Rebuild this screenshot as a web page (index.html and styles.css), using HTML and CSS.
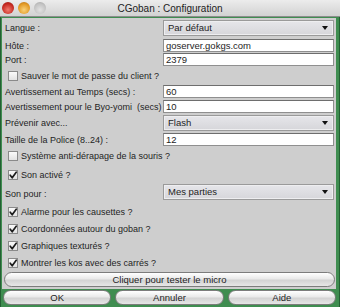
FILE: index.html
```html
<!DOCTYPE html>
<html lang="fr">
<head>
<meta charset="utf-8">
<title>CGoban : Configuration</title>
<link rel="stylesheet" href="styles.css">
</head>
<body>
<div class="window">
  <div class="titlebar">
    <div class="lights">
      <span class="light red"></span>
      <span class="light orange"></span>
      <span class="light gray"></span>
    </div>
    <div class="title">CGoban : Configuration</div>
  </div>
  <div class="panel">
    <div class="row r-langue">
      <span class="lbl">Langue :</span>
      <div class="select">Par défaut<span class="arrow"></span></div>
    </div>
    <div class="row r-field mt2">
      <span class="lbl">Hôte :</span>
      <div class="field">goserver.gokgs.com</div>
    </div>
    <div class="row r-field mt1">
      <span class="lbl">Port :</span>
      <div class="field">2379</div>
    </div>
    <div class="row r-check r-sauver">
      <span class="box"></span><span class="ctext">Sauver le mot de passe du client ?</span>
    </div>
    <div class="row r-field">
      <span class="lbl">Avertissement au Temps (secs) :</span>
      <div class="field">60</div>
    </div>
    <div class="row r-field mt2">
      <span class="lbl">Avertissement pour le Byo-yomi&nbsp; (secs) :</span>
      <div class="field">10</div>
    </div>
    <div class="row r-select mt2">
      <span class="lbl">Prévenir avec...</span>
      <div class="select">Flash<span class="arrow"></span></div>
    </div>
    <div class="row r-field mt2">
      <span class="lbl">Taille de la Police (8..24) :</span>
      <div class="field">12</div>
    </div>
    <div class="row r-check r-systeme">
      <span class="box"></span><span class="ctext">Système anti-dérapage de la souris ?</span>
    </div>
    <div class="row r-check r-son">
      <span class="box checked"><svg viewBox="0 0 10 10" width="10" height="10"><path d="M2.2 5.2 L4.2 7.8 L8.2 2.2" fill="none" stroke="#1c1c1c" stroke-width="1.7" stroke-linecap="round" stroke-linejoin="round"/></svg></span><span class="ctext">Son activé ?</span>
    </div>
    <div class="row r-select">
      <span class="lbl lbl-low">Son pour :</span>
      <div class="select">Mes parties<span class="arrow"></span></div>
    </div>
    <div class="row r-check r-17 mt3">
      <span class="box checked"><svg viewBox="0 0 10 10" width="10" height="10"><path d="M2.2 5.2 L4.2 7.8 L8.2 2.2" fill="none" stroke="#1c1c1c" stroke-width="1.7" stroke-linecap="round" stroke-linejoin="round"/></svg></span><span class="ctext">Alarme pour les causettes ?</span>
    </div>
    <div class="row r-check r-17">
      <span class="box checked"><svg viewBox="0 0 10 10" width="10" height="10"><path d="M2.2 5.2 L4.2 7.8 L8.2 2.2" fill="none" stroke="#1c1c1c" stroke-width="1.7" stroke-linecap="round" stroke-linejoin="round"/></svg></span><span class="ctext">Coordonnées autour du goban ?</span>
    </div>
    <div class="row r-check r-17">
      <span class="box checked"><svg viewBox="0 0 10 10" width="10" height="10"><path d="M2.2 5.2 L4.2 7.8 L8.2 2.2" fill="none" stroke="#1c1c1c" stroke-width="1.7" stroke-linecap="round" stroke-linejoin="round"/></svg></span><span class="ctext">Graphiques texturés ?</span>
    </div>
    <div class="row r-check r-17">
      <span class="box checked"><svg viewBox="0 0 10 10" width="10" height="10"><path d="M2.2 5.2 L4.2 7.8 L8.2 2.2" fill="none" stroke="#1c1c1c" stroke-width="1.7" stroke-linecap="round" stroke-linejoin="round"/></svg></span><span class="ctext">Montrer les kos avec des carrés ?</span>
    </div>
    <div class="btn wide">Cliquer pour tester le micro</div>
  </div>
  <div class="buttons">
    <div class="btn">OK</div>
    <div class="btn">Annuler</div>
    <div class="btn">Aide</div>
  </div>
</div>
</body>
</html>
```

FILE: styles.css
```css
* { box-sizing: border-box; }
html, body { margin: 0; padding: 0; }
body {
  width: 340px;
  height: 307px;
  overflow: hidden;
  font-family: "Liberation Sans", Arial, sans-serif;
  font-size: 9px;
  color: #1e1e1e;
  background: #3f8d50;
}
.window {
  width: 340px;
  height: 307px;
  display: flex;
  flex-direction: column;
  background: #3f8d50;
  border-left: 1px solid #245f33;
  border-right: 1px solid #245f33;
}
.titlebar {
  height: 17px;
  flex: none;
  display: flex;
  align-items: center;
  position: relative;
  background: linear-gradient(#ececec, #d2d2d2);
  border-bottom: 1px solid #8c8c8c;
  margin: 0 -1px;
}
.lights {
  display: flex;
  gap: 4px;
  padding-left: 2px;
}
.light {
  width: 12px;
  height: 12px;
  border-radius: 50%;
  display: block;
}
.light.red { background: radial-gradient(circle at 50% 65%, #f27a6e, #c52a22 60%, #8e1510); }
.light.orange { background: radial-gradient(circle at 50% 65%, #f9d27a, #e39a25 60%, #a86410); }
.light.gray { background: radial-gradient(circle at 50% 65%, #e2e2e2, #c3c3c3 60%, #9d9d9d); }
.title {
  position: absolute;
  left: 0;
  right: 0;
  text-align: center;
  font-size: 10px;
  color: #222;
}
.panel {
  flex: none;
  margin: 1px 3px 0 1px;
  padding: 1px 2px 2px 3px;
  background: #cecece;
  display: flex;
  flex-direction: column;
}
.row {
  display: flex;
  align-items: center;
}
.lbl {
  width: 158px;
  flex: none;
  white-space: nowrap;
}
.r-langue { height: 18px; }
.r-field { height: 13px; }
.r-select { height: 16px; }
.mt1 { margin-top: 1px; }
.mt2 { margin-top: 2px; }
.mt3 { margin-top: 3px; }
.r-sauver { height: 19px; }
.r-systeme { height: 20px; }
.r-son { height: 18px; }
.r-17 { height: 17px; }
.lbl-low { padding-top: 3px; }
.field {
  flex: 1;
  height: 13px;
  background: #fff;
  border: 1px solid #8f8f8f;
  border-top-color: #6e6e6e;
  padding-left: 2px;
  line-height: 11px;
  font-size: 9.5px;
}
.select {
  flex: 1;
  height: 16px;
  position: relative;
  background: linear-gradient(#e6e6ea, #d6d6da);
  border: 1px solid #9a9a9a;
  box-shadow: inset 0 0 0 1px #eeeef0;
  padding-left: 4px;
  line-height: 14px;
  font-size: 9.5px;
}
.arrow {
  position: absolute;
  right: 5px;
  top: 5px;
  width: 0;
  height: 0;
  border-left: 3.5px solid transparent;
  border-right: 3.5px solid transparent;
  border-top: 4px solid #111;
}
.r-check { padding-left: 3px; }
.box {
  width: 10px;
  height: 10px;
  flex: none;
  border: 1px solid #8a8a8a;
  background: linear-gradient(#fafafa, #e2e2e2);
  display: flex;
  align-items: center;
  justify-content: center;
}
.box svg { display: block; margin: -1px; }
.ctext { margin-left: 3px; white-space: nowrap; }
.btn {
  height: 15px;
  border: 1px solid #7c7c7c;
  border-radius: 8px;
  background: linear-gradient(#ffffff, #e9e9e9 45%, #d3d3d3 55%, #e6e6e6);
  text-align: center;
  line-height: 13px;
  font-size: 9.5px;
  color: #1e1e1e;
}
.wide { margin: 1px -1px 0 -1px; }
.buttons {
  display: flex;
  gap: 4px;
  padding: 1px 3px 0 2px;
}
.buttons .btn { flex: 1; }
```
